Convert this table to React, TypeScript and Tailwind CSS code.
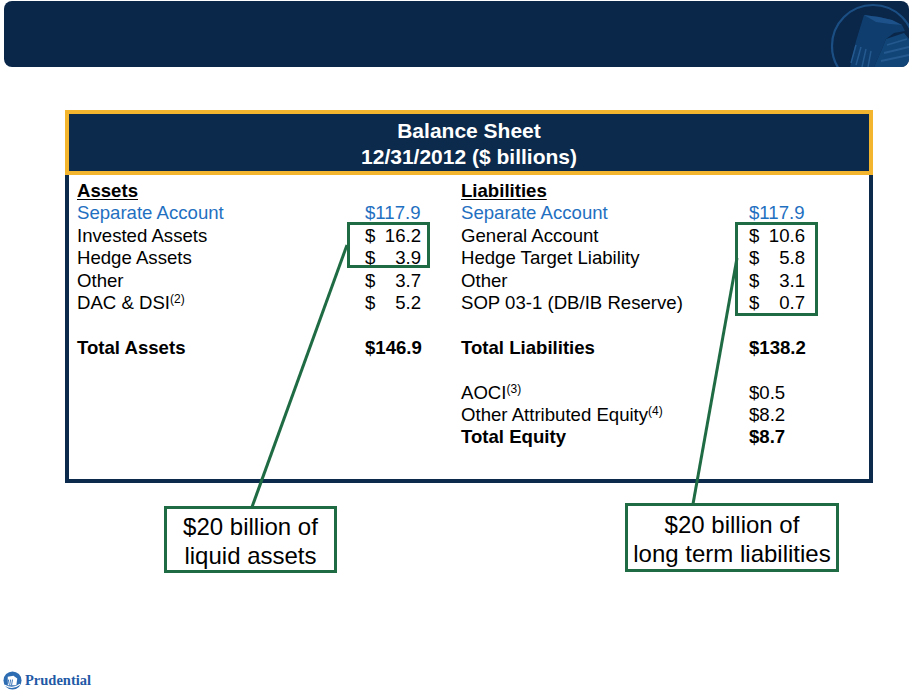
import React from "react";

type Row =
  | { kind: "blank" }
  | {
      kind: "row";
      label: string;
      sup?: string;
      style?: "head" | "blue" | "bold";
      value?: string;
      split?: [string, string];
    };

const leftRows: Row[] = [
  { kind: "row", label: "Assets", style: "head" },
  { kind: "row", label: "Separate Account", style: "blue", value: "$117.9" },
  { kind: "row", label: "Invested Assets", split: ["$", "16.2"] },
  { kind: "row", label: "Hedge Assets", split: ["$", "3.9"] },
  { kind: "row", label: "Other", split: ["$", "3.7"] },
  { kind: "row", label: "DAC & DSI", sup: "(2)", split: ["$", "5.2"] },
  { kind: "blank" },
  { kind: "row", label: "Total Assets", style: "bold", value: "$146.9" },
];

const rightRows: Row[] = [
  { kind: "row", label: "Liabilities", style: "head" },
  { kind: "row", label: "Separate Account", style: "blue", value: "$117.9" },
  { kind: "row", label: "General Account", split: ["$", "10.6"] },
  { kind: "row", label: "Hedge Target Liability", split: ["$", "5.8"] },
  { kind: "row", label: "Other", split: ["$", "3.1"] },
  { kind: "row", label: "SOP 03-1 (DB/IB Reserve)", split: ["$", "0.7"] },
  { kind: "blank" },
  { kind: "row", label: "Total Liabilities", style: "bold", value: "$138.2" },
  { kind: "blank" },
  { kind: "row", label: "AOCI", sup: "(3)", value: "$0.5" },
  { kind: "row", label: "Other Attributed Equity", sup: "(4)", value: "$8.2" },
  { kind: "row", label: "Total Equity", style: "bold", value: "$8.7" },
];

function Column({ rows }: { rows: Row[] }) {
  return (
    <div className="grid grid-cols-[288px_56px] auto-rows-[22.4px] leading-[22.4px]">
      {rows.map((r, i) => {
        if (r.kind === "blank")
          return (
            <React.Fragment key={i}>
              <div />
              <div />
            </React.Fragment>
          );
        const color = r.style === "blue" ? "text-[#1f70c1]" : "text-black";
        const weight =
          r.style === "head" || r.style === "bold" ? "font-bold" : "font-normal";
        return (
          <React.Fragment key={i}>
            <div className={`${color} ${weight} whitespace-nowrap`}>
              <span className={r.style === "head" ? "underline underline-offset-[2px]" : ""}>
                {r.label}
              </span>
              {r.sup && <sup className="text-[12px]">{r.sup}</sup>}
            </div>
            <div className={`${color} ${weight} whitespace-nowrap`}>
              {r.split ? (
                <div className="flex justify-between">
                  <span>{r.split[0]}</span>
                  <span>{r.split[1]}</span>
                </div>
              ) : (
                r.value ?? ""
              )}
            </div>
          </React.Fragment>
        );
      })}
    </div>
  );
}

export default function App() {
  return (
    <div
      className="relative w-[910px] h-[693px] bg-white overflow-hidden flex flex-col"
      style={{ fontFamily: '"Liberation Sans", Arial, sans-serif' }}
    >
      {/* Top banner */}
      <div className="relative mx-[4px] mt-[1px] h-[66px] w-[905px] rounded-[8px] bg-[#0a2649] overflow-hidden shrink-0">
        <svg
          className="absolute inset-0"
          width="905"
          height="66"
          viewBox="0 0 905 66"
        >
          <circle cx="869" cy="45" r="41" fill="none" stroke="#1b4f84" strokeWidth="2.2" />
          <polygon
            points="860,14 875,16 888,19 898,24 901,30 890,32 882,38 878,48 870,66 846,66 852,40"
            fill="#0f3d6d"
          />
          <polygon points="860,14 875,16 888,19 898,24 886,23 872,21" fill="#1d5189" />
          <path
            d="M852 44 L847 62 M857 46 L852 64 M862 48 L858 66 M867 50 L864 66"
            stroke="#24598f"
            strokeWidth="1.5"
          />
          <polygon points="882,38 900,32 905,38 905,66 870,66 878,48" fill="#124577" />
          <path
            d="M883 44 L903 38 M880 52 L905 46 M877 60 L905 54"
            stroke="#24598f"
            strokeWidth="1.8"
          />
        </svg>
      </div>

      {/* Balance sheet table */}
      <div className="ml-[65px] mt-[43px] w-[808px] shrink-0">
        <div className="h-[65px] border-[4px] border-[#f3b52e] bg-[#0b2a4c] text-white font-bold text-[21px] leading-[26px] text-center pt-[4px]">
          <div>Balance Sheet</div>
          <div>12/31/2012 ($ billions)</div>
        </div>
        <div className="border-x-[4px] border-b-[4px] border-[#0b2a4c] h-[308px] pl-[8px] pt-[5px] text-[18.6px]">
          <div className="flex gap-[40px]">
            <Column rows={leftRows} />
            <Column rows={rightRows} />
          </div>
        </div>
      </div>

      {/* Callouts */}
      <div className="flex items-start shrink-0 text-[24px] leading-[29px] text-black text-center">
        <div className="ml-[164px] mt-[23px] w-[173px] h-[67px] border-[3px] border-[#1f6b43] flex flex-col justify-center pt-[3px]">
          <div>$20 billion of</div>
          <div>liquid assets</div>
        </div>
        <div className="ml-[288px] mt-[20px] w-[214px] h-[69px] border-[3px] border-[#1f6b43] flex flex-col justify-center pt-[3px]">
          <div>$20 billion of</div>
          <div>long term liabilities</div>
        </div>
      </div>

      {/* Footer logo */}
      <div className="mt-auto mb-[3px] ml-[3px] flex items-center gap-[3px]">
        <svg width="19" height="19" viewBox="0 0 20 20">
          <circle cx="10" cy="10" r="9.5" fill="#2f6db3" />
          <path d="M5 6 L11 5 L15 8 L14 15 L5 15 Z" fill="#ffffff" />
          <path d="M6 9 L5 14 M8 9 L7 15 M10 9 L9 15" stroke="#2f6db3" strokeWidth="1" />
          <path d="M2 15 Q10 20 18 14" stroke="#ffffff" strokeWidth="1.2" fill="none" />
        </svg>
        <span
          className="text-[14.5px] font-bold text-[#1f5aa6] leading-none"
          style={{ fontFamily: '"Liberation Serif", "Times New Roman", serif' }}
        >
          Prudential
        </span>
      </div>

      {/* Connector lines */}
      <svg
        className="absolute inset-0 pointer-events-none"
        width="910"
        height="693"
        viewBox="0 0 910 693"
      >
        <line x1="347" y1="245" x2="252" y2="507" stroke="#1f6b43" strokeWidth="3" />
        <line x1="737" y1="258" x2="693" y2="504" stroke="#1f6b43" strokeWidth="3" />
      </svg>

      {/* Green boxes around values */}
      <div className="absolute left-[347px] top-[222px] w-[83px] h-[46px] border-[3px] border-[#1f6b43]" />
      <div className="absolute left-[735px] top-[222px] w-[83px] h-[94px] border-[3px] border-[#1f6b43]" />
    </div>
  );
}
